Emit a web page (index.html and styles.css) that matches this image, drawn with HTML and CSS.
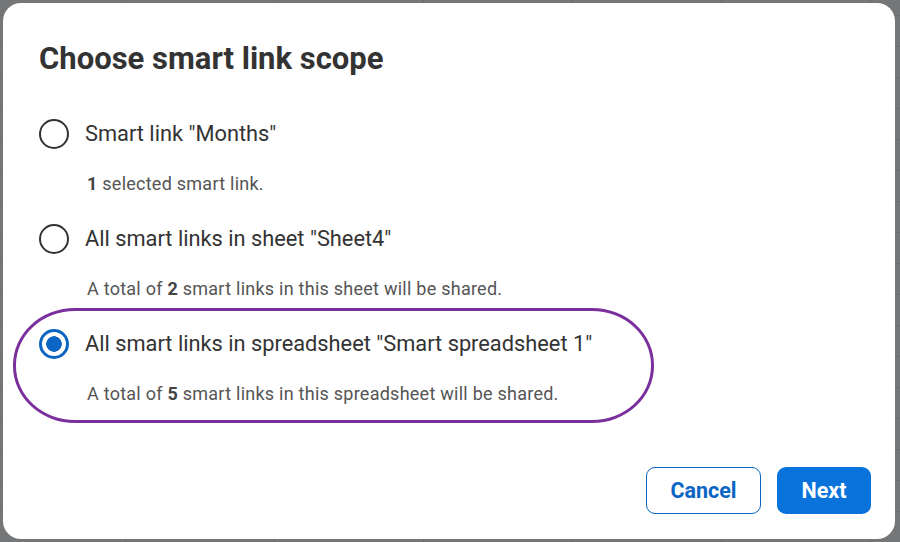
FILE: index.html
```html
<!DOCTYPE html>
<html>
<head>
<meta charset="utf-8">
<link rel="stylesheet" href="styles.css">
</head>
<body>
<div class="dialog">
  <h1 class="title">Choose smart link scope</h1>
  <div class="options">
    <div class="option">
      <div class="row"><span class="radio"></span><span class="label">Smart link "Months"</span></div>
      <div class="desc"><b>1</b> selected smart link.</div>
    </div>
    <div class="option">
      <div class="row"><span class="radio"></span><span class="label">All smart links in sheet "Sheet4"</span></div>
      <div class="desc">A total of <b>2</b> smart links in this sheet will be shared.</div>
    </div>
    <div class="option selected">
      <div class="row"><span class="radio"></span><span class="label">All smart links in spreadsheet "Smart spreadsheet 1"</span></div>
      <div class="desc">A total of <b>5</b> smart links in this spreadsheet will be shared.</div>
      <div class="highlight"></div>
    </div>
  </div>
  <div class="actions">
    <button class="btn btn-secondary">Cancel</button>
    <button class="btn btn-primary">Next</button>
  </div>
</div>
</body>
</html>
```
FILE: styles.css
```css
html, body {
  margin: 0;
  padding: 0;
}
body {
  width: 900px;
  height: 542px;
  background-color: #757677;
  background-image:
    repeating-linear-gradient(90deg, transparent 0 125px, #6a6b6c 125px 126px, transparent 126px 149px),
    repeating-linear-gradient(0deg, transparent 0 30px, #6d6e70 30px 31px);
  font-family: Roboto, "Liberation Sans", sans-serif;
  padding: 3px 5px 3px 3px;
  box-sizing: border-box;
  overflow: hidden;
}
.dialog {
  background: #fff;
  border-radius: 18px;
  height: 536px;
  box-sizing: border-box;
  padding: 38px 24px 25px 36px;
  display: flex;
  flex-direction: column;
}
.title {
  margin: 0;
  font-size: 31px;
  font-weight: 700;
  color: #333;
  line-height: 36px;
}
.options {
  margin-top: 41px;
  display: flex;
  flex-direction: column;
  gap: 28px;
}
.option {
  position: relative;
}
.row {
  display: flex;
  align-items: center;
  gap: 16px;
  height: 32px;
}
.radio {
  width: 30px;
  height: 30px;
  box-sizing: border-box;
  border: 2.5px solid #333;
  border-radius: 50%;
  flex: none;
}
.selected .radio {
  border: 3px solid #0a66c2;
  background: radial-gradient(circle, #0a66c2 0 7.5px, #fff 8px);
}
.label {
  font-size: 21.8px;
  color: #333;
  line-height: 28px;
}
.desc {
  margin-top: 23px;
  margin-left: 48px;
  font-size: 18px;
  letter-spacing: 0.25px;
  color: #555;
  line-height: 22px;
}
.desc b {
  color: #444;
  font-weight: 700;
}
.highlight {
  position: absolute;
  left: -26px;
  top: -20px;
  width: 641px;
  height: 115px;
  border: 3px solid #7a2f9c;
  border-radius: 62px / 57px;
  box-sizing: border-box;
}
.actions {
  margin-top: auto;
  display: flex;
  justify-content: flex-end;
  gap: 16px;
}
.btn {
  height: 47px;
  border-radius: 9px;
  font-family: inherit;
  font-size: 21.5px;
  font-weight: 700;
  padding: 0;
  cursor: pointer;
}
.btn-secondary {
  background: #fff;
  color: #0a66c2;
  border: 1.5px solid #0a66c2;
  width: 115px;
}
.btn-primary {
  background: #0a73db;
  color: #fff;
  border: none;
  width: 94px;
}
```
